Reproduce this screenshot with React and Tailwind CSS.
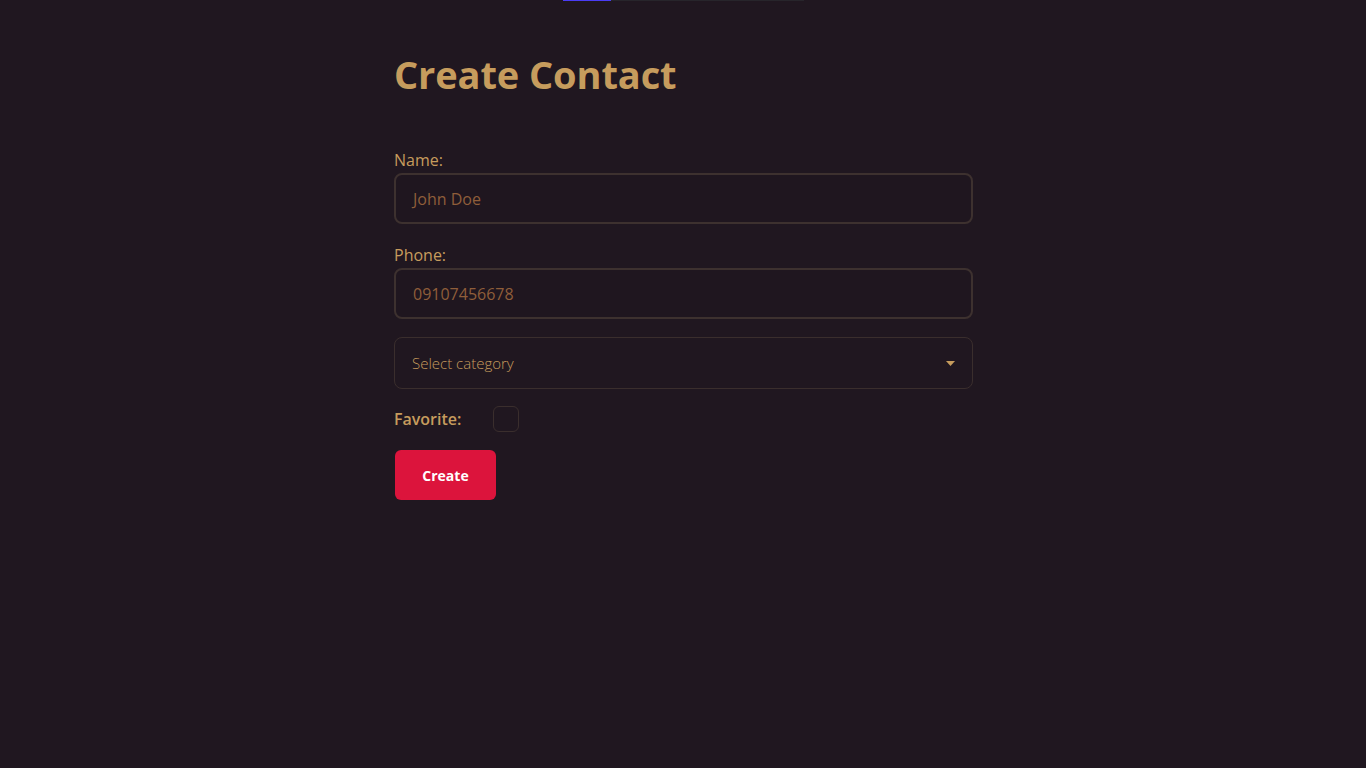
import { useState } from 'react'

const Field = ({ label, value }) => (
  <div className="flex flex-col">
    <label className="text-[16px] leading-5 font-medium text-[#c69c5d]">{label}</label>
    <div className="mt-[3px] flex h-[51px] items-center rounded-lg border-2 border-[#3d312f] bg-[#1f161f] px-[17px]">
      <span className="text-[16px] font-medium text-[#8f5e3a]">{value}</span>
    </div>
  </div>
)

const App = () => {
  const [fav, setFav] = useState(false)
  return (
    <div className="min-h-[768px] w-full bg-[#201720] font-['Open_Sans',sans-serif]">
      <div className="ml-[563px] flex h-px w-[241px] bg-[#27252b]">
        <div className="w-12 bg-[#4a3cf5]" />
      </div>
      <div className="ml-[394px] w-[579px] pt-[48px]">
        <h1 className="text-[38px] leading-[50px] font-bold tracking-[-0.1px] text-[#c69c5d]">Create Contact</h1>
        <form className="mt-[51px] flex flex-col gap-[22px]">
          <Field label="Name:" value="John Doe" />
          <div className="-mt-[1px]">
            <Field label="Phone:" value="09107456678" />
          </div>
          <div className="-mt-[4px] flex h-[52px] items-center justify-between rounded-lg border border-[#3a2e2d] px-[17px]">
            <span className="text-[15px] font-light text-[#c69c5d]">Select category</span>
            <svg width="9" height="5" viewBox="0 0 9 5">
              <path d="M0 0h9L4.5 5z" fill="#c69c5d" />
            </svg>
          </div>
          <div className="-mt-[5px] flex items-center">
            <span className="w-[99px] text-[16px] font-semibold text-[#c69c5d]">Favorite:</span>
            <button
              type="button"
              onClick={() => setFav(!fav)}
              className="h-[26px] w-[26px] rounded-md border border-[#3a2e2d]"
            />
          </div>
          <button
            type="button"
            className="-mt-[4px] ml-px h-[50px] w-[101px] rounded-md bg-[#dc143c] text-[14px] font-bold text-white"
          >
            Create
          </button>
        </form>
      </div>
    </div>
  )
}

export default App
